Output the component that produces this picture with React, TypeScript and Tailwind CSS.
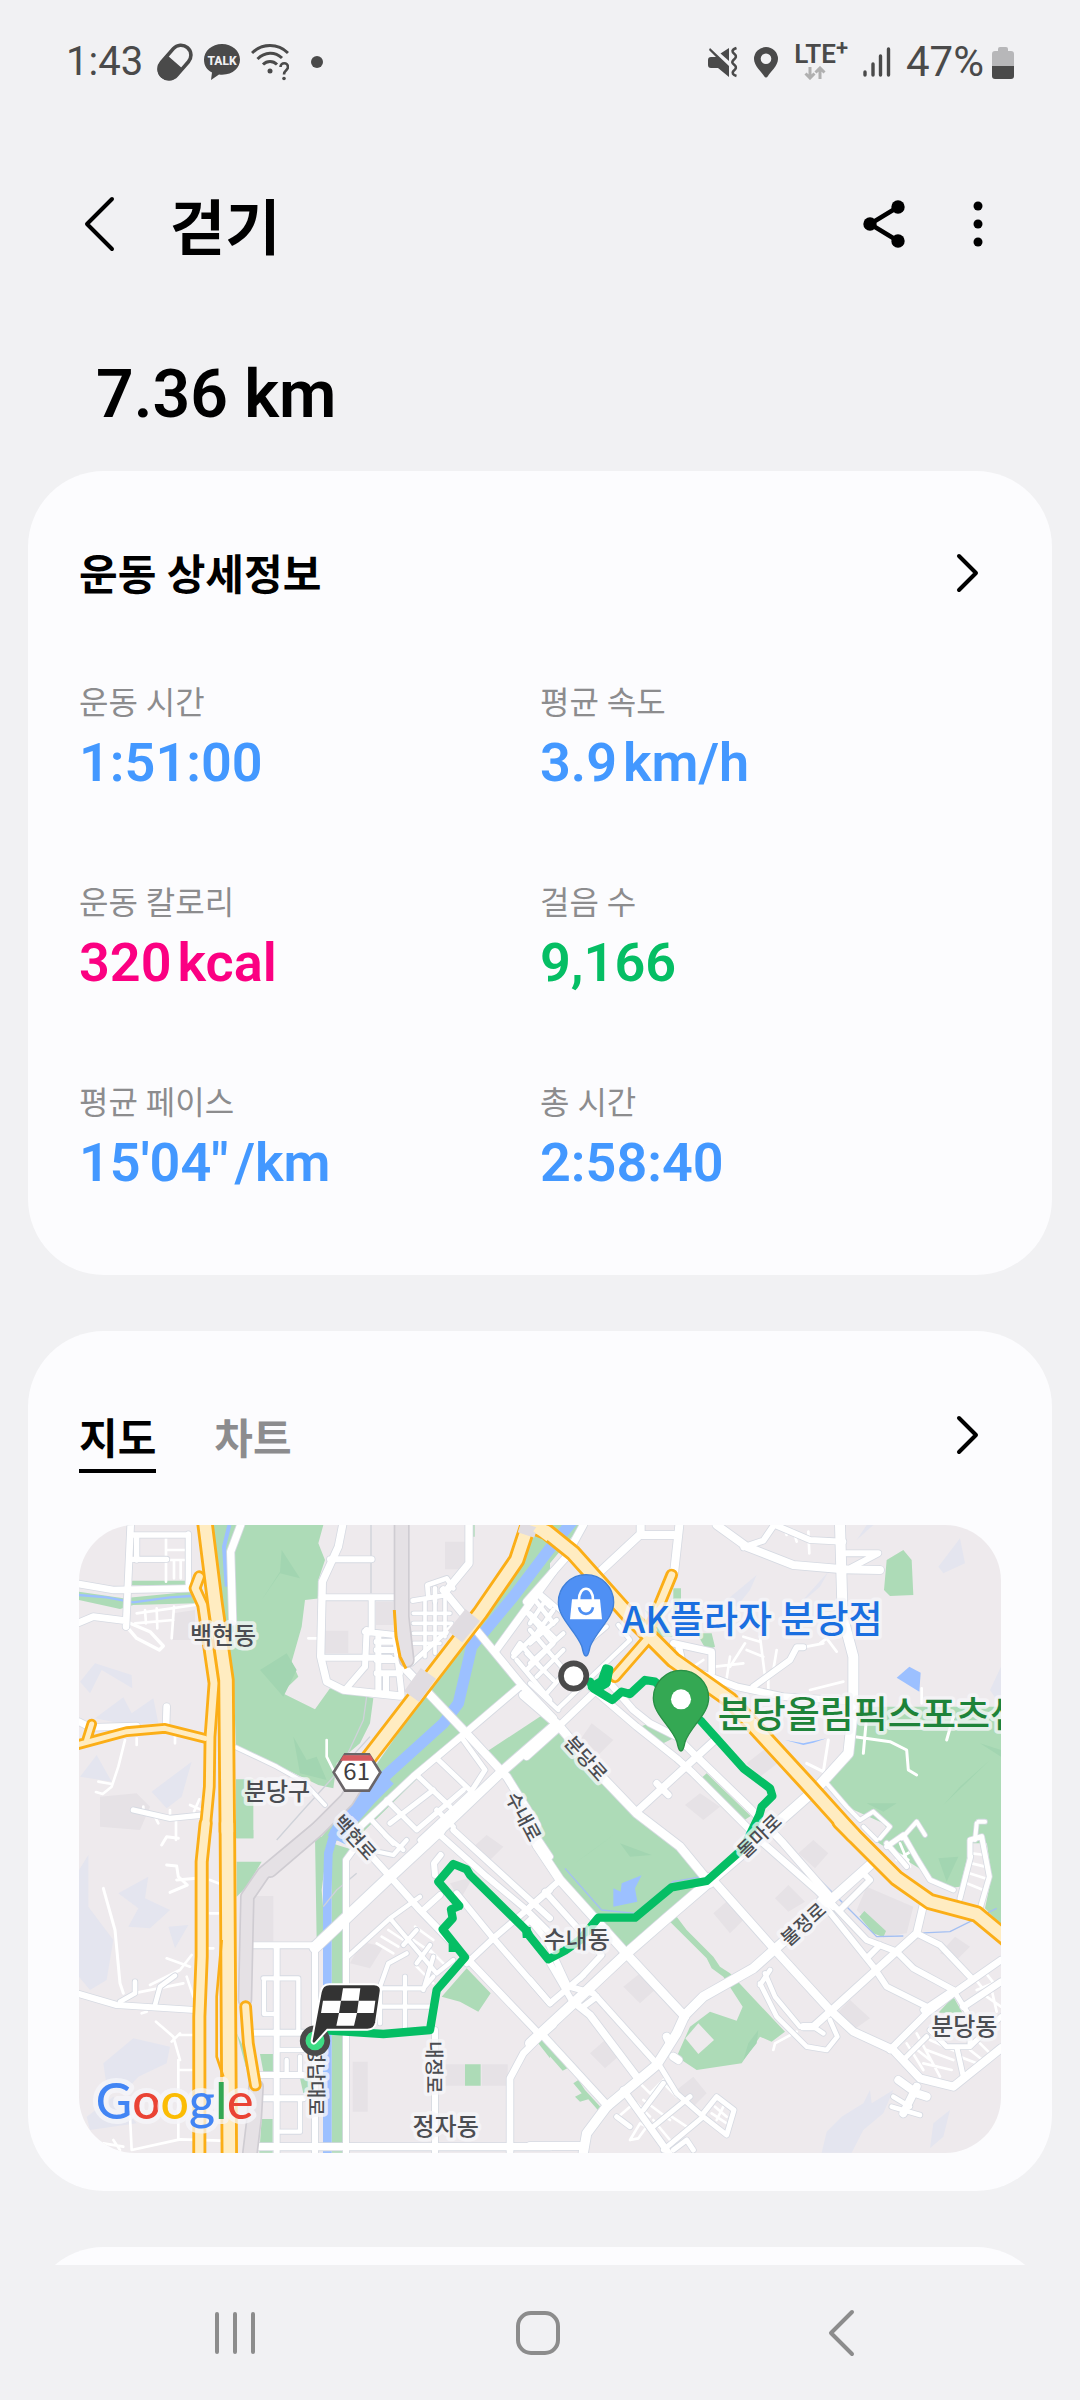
import { ReactNode } from "react";

type Tile = "nw" | "ne" | "sw" | "se";
type Line = [width: number, d: string];

// The map is drawn in four tiles that share one scale
const tileOffset: Record<Tile, string> = {
  nw: "translate(-27 -45)",
  ne: "translate(1353 -45)",
  sw: "translate(-27 915)",
  se: "translate(1353 915)",
};
const tiles: Tile[] = ["nw", "ne", "sw", "se"];

const terrain: Record<Tile, string> = {
  nw: "M30 515L75 460L185 495L187 535L95 480L60 550ZM75 625L160 562L185 610L250 565L265 640L150 640ZM30 800L80 735L125 815ZM245 845L365 755L335 860L290 895Z",
  ne: "M590 270L680 195L660 240L620 290ZM800 290L895 185L870 230ZM1225 170L1290 85L1305 160L1240 190ZM980 90L1010 45L1030 45ZM1380 540L1413 470V590Z",
  sw: "M27 120L55 75V230L130 330L110 450L60 480L27 440ZM145 190L235 140L225 205L300 240L240 295L175 290L205 235ZM295 290L355 285L315 355ZM100 700L190 625L300 650L290 700L205 740L160 790L110 770ZM50 860L130 800L200 880L60 900Z",
  se: "M875 968L890 905L935 860L1000 820L1020 780L1025 820L1090 780L1060 850L1000 900L965 968ZM1210 880L1260 840L1240 920L1200 955Z",
};

const blocks: Record<Tile, string> = {
  nw: "M765 362H835V430H765ZM1125 95H1190V178H1125ZM918 275H970V345H918ZM310 310L375 300V390H305ZM90 860L200 850L240 890L210 960L90 950Z",
  ne: "M185 640L250 690L205 735L150 690ZM650 760L720 705L755 750L690 800ZM465 885L510 850L570 890L520 930Z",
  sw: "M550 198H610V335H550ZM848 695H893V845H848ZM1235 703H1313V767H1235ZM1125 703H1185V767H1125ZM875 335L940 350L900 415L840 400ZM1205 55L1250 15L1300 50L1260 90ZM1140 160L1210 140L1170 210Z",
  se: "M550 250L595 210L650 260L600 310ZM735 205L775 165L825 215L775 245ZM805 70L850 30L895 70L855 115ZM280 470L330 430L380 475L330 520ZM180 670L225 630L270 675L225 715ZM440 780L490 740L530 790L490 830ZM925 545L960 510L1020 565L970 600ZM1010 170L1150 230L1130 310L1060 320L980 240ZM1230 370L1275 320L1320 350L1280 390Z",
};

const parks: Record<Tile, string> = {
  nw: "M428 45H760L745 100L765 150L745 210L750 265L705 270L695 350L665 455L685 500L635 548L735 598L780 535L910 565L900 640L870 700L800 760L790 835L745 825L498 705L490 500L450 250ZM1390 90L1440 45V200L1275 415L1350 525L1185 665L860 985L740 1000L880 820L1060 560L1200 350ZM27 245L160 265L360 245L375 280L190 285L150 297L27 270ZM185 212H350V226H185ZM498 808H550V985H498ZM1208 45H1214V80H1208Z",
  ne: "M-20 45H155L60 160L-20 260ZM-155 730L-20 620L50 590L85 668L310 915L440 1000L520 1100L525 1135L290 1312L200 1225L85 1110L20 990L-80 790ZM1050 590H1413V1000H1100L1060 940L950 890L885 815L960 750L985 590ZM1120 120L1145 150L1150 255L1080 258L1062 240L1070 150ZM530 790L662 918L640 932L508 810ZM370 635L430 685L400 700L330 650ZM430 235H453V265L430 330ZM345 300L400 330L430 380L385 380ZM500 370H545L555 410L530 422Z",
  sw: "M500 0H550V25H500ZM735 20H775L755 180L765 300L740 330ZM500 95H575L530 170L500 200ZM785 40L850 60L828 100V968H785ZM570 672H610V725H580ZM575 867H608V968H568ZM690 745H730V775L700 790ZM1115 500L1190 415L1262 490L1225 545L1170 515ZM1185 703H1232V767H1185ZM1405 640L1440 670V685ZM500 610L520 650L530 720Z",
  se: "M440 260L470 300L550 380L570 410L600 430L765 605L725 635L690 620L635 700L500 720L440 680L480 590L540 545L620 572L638 530L580 440L545 415L530 385L420 275ZM35 630L112 715L98 722L25 640ZM145 750L165 780L215 835L208 845L175 808L150 815L135 800L155 790L130 760ZM1003 243L1068 303L1060 322L1030 310L988 260ZM1080 0H1320L1310 90L1290 170L1250 175L1160 110L1040 35ZM1365 0H1413V285L1365 235L1385 140ZM1270 500L1297 548H1225Z",
};

const parkShade: Record<Tile, string> = {
  nw: "M635 120L690 205L630 190L575 270L630 185ZM570 480L650 430L680 480L640 560ZM670 680L710 750L740 740L770 810L690 790Z",
  ne: "M1010 880L1100 880L1060 905ZM1240 885L1380 750L1290 830ZM1350 700L1413 720V740Z",
  sw: "",
  se: "M135 100L250 15L190 60ZM270 40L365 75L300 80ZM1225 85L1285 80L1250 155ZM655 640L685 600L680 640L640 690Z",
};

const minorRoads: Record<Tile, Line[]> = {
  nw: [
    [8, "M288 85V215M312 150V205M332 150V205M290 120H345M290 150H345"],
    [8, "M200 310L375 285M195 340L310 330M312 290L305 385M260 295L262 355M225 300L228 340"],
    [10, "M170 350L200 385L268 420L280 408L240 365L180 340"],
    [8, "M165 690L145 770L125 830L98 852L78 846M85 815L125 822M200 685V705M315 675V700"],
    [8, "M265 940L250 910M300 900V930M360 885L395 900M372 905L388 868M318 930V990M220 890V905"],
    [8, "M770 690V740L790 780M715 385H745"],
  ],
  ne: [
    [8, "M790 60L800 95M835 65L838 130M765 60L770 75"],
    [8, "M690 380L705 500M650 420L700 440M645 400L600 470M740 420L730 480M840 540L940 515M870 400L890 385L920 425M640 380L690 395M830 410L880 400"],
    [8, "M555 470L640 460M600 440L590 505M460 450L500 490M475 480L520 450M715 510V550M1175 535V580"],
    [9, "M975 680L1080 695L1130 720L1135 780L1160 795M1008 640L1000 730M1270 620L1250 690M895 690L880 785L830 760"],
  ],
  sw: [
    [9, "M100 175L135 300L150 460L160 490M290 105L320 108L325 140L352 165L300 187M320 150L380 145M275 45L290 20L325 25"],
    [8, "M290 385L360 410M365 375L330 420L240 465M190 490L340 460M350 440L370 500M215 550L230 545M258 575L310 620L330 690M330 615H370M305 635L330 610M420 250H445M415 355H430M420 150L445 160"],
    [8, "M325 690V930M325 720H365M180 860L185 960L330 928L450 932M100 940L160 950M130 930L150 960"],
    [8, "M920 340L970 370M935 320L985 350M955 300L1000 330M1035 290L1090 330M1015 320L1080 365M1080 360L1130 410M1040 410L1090 460"],
  ],
  se: [
    [8, "M330 760L370 800M360 790L410 740M320 820L360 860M340 810L420 870M400 760L440 800M390 880L440 830M420 930L370 870M410 850L470 890M265 860L300 830M300 930L330 880L350 890L325 925L300 930"],
    [8, "M1130 640L1180 720M1160 610L1230 740M1150 650L1200 690M1190 660L1270 690M1180 700L1265 720M1200 630L1280 665M1320 660L1370 700M1350 640L1390 680M1290 680L1340 700"],
    [8, "M1330 440L1370 490M1360 420L1400 470M1340 480L1413 450M1370 500L1413 530M1385 480L1400 545"],
    [8, "M1325 70L1365 75M1325 100L1365 110M1318 130L1365 145M1310 160L1360 180M1085 60L1135 90M1100 90L1150 60M1110 40L1140 110"],
    [8, "M555 830L590 860M545 850L590 880M580 830L560 870M730 660L735 640L800 605M740 500L790 570"],
  ],
};

const roads: Record<Tile, Line[]> = {
  nw: [
    [20, "M27 222L130 240L365 235M182 45L168 350M27 338L70 320L165 332"],
    [16, "M180 75H355M355 72V225M200 80V150M180 148H290"],
    [22, "M512 45L482 125L488 335"],
    [12, "M498 712L620 770L700 815L765 885"],
    [20, "M27 635L60 652L200 648M290 590L288 655"],
    [16, "M190 900L300 925L400 915"],
    [22, "M818 45L805 110L757 215L752 440L770 515L820 540L990 558"],
    [18, "M780 148H905M755 262H975M755 443H960M905 262V360M890 360L885 470M885 365L975 375L995 555M925 380V550M825 540L885 470M920 395H980M920 420H980M920 450H980M920 490H990M948 490V555"],
    [22, "M1197 45V160L1135 235"],
    [14, "M1075 262L1072 225L1130 205L1150 235M1028 272L1130 255M1025 460L1145 350M1095 235V275"],
    [11, "M1065 270V440M1095 265V430M1030 310H1140M1030 340H1145M1030 370H1130M1030 400H1110M1125 255V380"],
    [22, "M1120 240L1190 325L1355 525L1450 625"],
    [24, "M1000 470L1185 665L1310 800L1400 945"],
    [22, "M1450 185L1275 425"],
    [14, "M1440 290L1400 250M1395 270L1450 340M1365 300L1450 400M1330 440L1400 370L1450 300M1340 450L1440 570M1370 480L1450 400M1330 430L1350 400L1410 470"],
    [20, "M1355 525L1185 670L1030 800L860 960"],
    [28, "M1450 650L1295 785L1090 980"],
    [15, "M1180 690L1245 780L1200 850L1050 990M1040 795L1140 890M1100 745L1210 850M950 870L1040 960L1180 840M900 925L970 1000M1090 840L960 940M1100 900L1150 950"],
  ],
  ne: [
    [22, "M160 45L105 145L-10 275"],
    [24, "M332 45V72L205 190M330 75H430M448 45L432 190"],
    [24, "M560 45L650 110L790 165L940 178L1050 180"],
    [18, "M732 45L700 92L640 112M735 45L840 90L940 95M950 130H1045L965 172"],
    [30, "M930 45L938 320L970 440L970 590L955 730L860 835L690 985L410 1225L290 1330L130 1480L0 1600"],
    [20, "M430 400L545 425V490M445 405L460 470L620 530L760 560L985 575"],
    [18, "M670 530L780 450L800 412H820"],
    [13, "M30 250L95 305M0 310L75 385M0 360L120 500M-10 430L70 510M0 520L85 600M0 340L40 280M0 400L80 330M0 460L100 370M20 500L100 420M50 550L120 470M85 595L300 390L265 345M170 400L230 350"],
    [26, "M-20 555L85 645L215 800L320 910L450 1010L540 1120"],
    [20, "M85 650L200 540L240 500M85 655L-10 740"],
    [20, "M240 520L310 600L360 640L440 680L500 740M180 530L320 650L440 745L490 790L700 1000L860 1140L910 1190"],
    [22, "M500 740L660 895L760 1000L900 1160M320 905L560 685"],
    [20, "M380 820L415 855"],
    [12, "M890 820L950 890L990 930M990 930L1030 905L1080 950L1050 985M1000 950L1040 990M1115 985L1160 935L1185 975M1340 940L1335 990M1345 935H1365"],
  ],
  sw: [
    [18, "M27 492L140 525L375 540"],
    [14, "M195 455V490L150 515M315 437L270 470L255 525"],
    [34, "M735 352L965 135L1110 0"],
    [18, "M550 346H735M828 968V90L850 60M620 350V968M550 608H730M560 735H700M560 805H700M735 350V968M1095 600V968"],
    [13, "M580 445H685V600M582 445V552H610M690 805V905H630M650 690V735M690 680V730M620 660H700"],
    [22, "M560 950H1440"],
    [20, "M1320 968V745L1360 670L1410 620L1450 585"],
    [20, "M870 40L965 145L1050 240L1200 395L1410 615"],
    [18, "M1110 15L1250 140L1370 240L1440 310M1190 400L1270 325L1440 180M1160 190L1270 325L1440 520M1150 0L1440 265M1400 20L1440 80M1060 240L1110 195"],
    [18, "M1112 75L1092 100L1095 135"],
    [13, "M828 385L960 265L1050 200M960 265L1100 430M1100 430L1150 390M930 580V470L955 400L1010 370M930 475H1060L1090 440M920 530H1085M1005 440V600M1040 300L1000 345M1060 480L1090 380M900 60L970 75L1010 30M945 15L1000 60M1080 345L1040 400"],
  ],
  se: [
    [26, "M-10 -30L20 45L90 150L290 372L465 560"],
    [18, "M90 150L0 230M45 185L130 280L215 375L150 445M0 450L60 520L160 435M0 270L50 330L110 460M60 400L130 520M-20 290L0 270"],
    [28, "M1020 105L900 212L735 357L670 415L520 500L465 555L440 610L380 705L230 830L170 910L160 968"],
    [22, "M130 515L180 555L320 740M35 612L235 830"],
    [18, "M190 490L370 690M100 465L190 490M160 530L200 500"],
    [24, "M540 140L735 360L900 540L970 605L1090 660L1170 745L1270 770L1413 655"],
    [22, "M900 545L1110 355L1160 310L1180 225M820 590H850L900 545"],
    [14, "M690 460L740 560L830 650L890 660L922 620L900 570M705 430L735 500L810 590M850 590L880 610M690 465L720 420"],
    [18, "M910 225L1010 330L1100 365L1150 415L1270 480L1180 540M870 210L1030 410L1070 470L1190 530M1160 310L1230 345L1320 440M1000 130L1020 150L930 240M1010 385L1050 345"],
    [20, "M1080 660L1190 550L1270 490L1413 390M1300 530L1413 455"],
    [15, "M1270 480L1320 560V640M1200 600L1250 650L1320 650L1413 560M1280 650L1300 740M1120 690L1190 620"],
    [15, "M1320 80V30L1355 20L1378 140L1352 230M1322 80L1290 205M1070 50L1120 15L1160 85L1200 150L1270 180M1070 40L1130 110"],
    [24, "M1105 750L1160 790L1190 800M1160 770L1120 850"],
    [14, "M1085 830L1170 855M1090 800L1140 830"],
    [20, "M280 780L420 975"],
    [15, "M385 700L440 790L520 860L590 915L612 840L560 800L520 850M520 860L400 960M370 890L480 800M340 840L400 760M260 860L300 890M430 960L470 930L490 960"],
    [24, "M0 948H160M410 620L420 640M430 680L445 690"],
  ],
};

const railways: Record<Tile, Line[]> = {
  nw: [[44, "M995 45V320L1010 450M880 790L830 870L740 960L600 1080"]],
  ne: [],
  sw: [
    [40, "M760 -20L700 30L580 130L532 200L525 510"],
    [44, "M558 770L553 860L540 968"],
  ],
  se: [],
};

const highways: Record<Tile, Line[]> = {
  nw: [
    [30, "M388 200L375 235L398 285L432 520L420 680L418 830L405 965"],
    [44, "M405 40L435 280L468 510L472 965"],
    [24, "M20 705L170 665L285 655L405 685M50 690L65 642"],
    [44, "M1378 35L1340 150L1230 310L895 745"],
  ],
  ne: [
    [30, "M425 195L355 365M355 385L255 500"],
    [44, "M0 45L50 65L130 130L300 320L430 450L600 570L830 820L970 975"],
  ],
  sw: [
    [34, "M407 -20L395 95L395 380L388 560V975"],
    [44, "M472 -20L475 500L478 975"],
    [30, "M527 530L535 640L556 765"],
  ],
  se: [[44, "M930 -25L1100 145L1200 215L1340 252L1440 335"]],
};

// Walked route, in ne tile coordinates
const route =
  "M180 515L190 535L247 570L275 545L300 552L345 510L375 515L430 560L515 635L640 775L720 835L727 858L695 890L688 915L640 1015L530 1113L425 1132L315 1223H205L150 1290L105 1322L55 1348L0 1280L-10 1262L-180 1095L-190 1078L-230 1062L-275 1115L-212 1188L-237 1198L-232 1225L-262 1258L-195 1342L-280 1440L-300 1560L-440 1572L-600 1562";

function Tiles({ children }: { children: (tile: Tile) => ReactNode }) {
  return (
    <>
      {tiles.map((tile) => (
        <g key={tile} transform={tileOffset[tile]}>
          {children(tile)}
        </g>
      ))}
    </>
  );
}

function Lines({ lines, color, extra = 0 }: { lines: Line[]; color: string; extra?: number }) {
  return (
    <g fill="none" stroke={color} strokeLinecap="round" strokeLinejoin="round">
      {lines.map(([width, d]) => (
        <path key={d} d={d} strokeWidth={width + extra} />
      ))}
    </g>
  );
}

interface MapLabelProps {
  x: number;
  y: number;
  rotate?: number;
  size?: number;
  color?: string;
  anchor?: "start" | "middle";
  children: ReactNode;
}

function MapLabel({ x, y, rotate = 0, size = 72, color = "#4b4d52", anchor = "middle", children }: MapLabelProps) {
  return (
    <text
      transform={`translate(${x} ${y}) rotate(${rotate})`}
      y={size * 0.36}
      fontSize={size}
      fill={color}
      textAnchor={anchor}
      stroke="#f6f6f9"
      strokeOpacity="0.75"
      strokeWidth="22"
      strokeLinejoin="round"
      paintOrder="stroke"
      className="font-medium"
    >
      {children}
    </text>
  );
}

function RouteMap() {
  return (
    <svg
      viewBox="0 0 2766 1884"
      role="img"
      aria-label="지도"
      className="mt-[52px] block w-full rounded-[56px] bg-[#eeeaed] font-['Noto_Sans_CJK_KR',sans-serif]"
    >
      <Tiles>{(t) => <path d={terrain[t]} fill="#e4e5ef" />}</Tiles>
      <Tiles>{(t) => <path d={blocks[t]} fill="#e6e2e6" />}</Tiles>
      <Tiles>{(t) => <path d={parks[t]} fill="#addbb7" />}</Tiles>
      <Tiles>{(t) => <path d={parkShade[t]} fill="#a2d5b1" />}</Tiles>

      {/* Cut-outs in the parks */}
      <path d="M505 580L552 630L505 672L466 625Z" transform={tileOffset.se} fill="#eeeaed" />
      <path d="M1200 668L1395 560L1440 600L1235 735Z" transform={tileOffset.nw} fill="#eeeaed" />

      {/* Water */}
      <g transform={tileOffset.nw} fill="none" stroke="#9cc0ff">
        <path d="M1560 -30L1440 115L1330 260L1235 375" strokeWidth="34" />
        <path d="M1240 365L1205 410L1165 580L1120 640L960 785L890 850" strokeWidth="34" strokeLinejoin="round" />
        <path d="M950 800L890 860L830 930L800 990" strokeWidth="60" strokeLinejoin="round" />
        <path d="M795 960L775 1030L772 1140V1930" strokeWidth="26" />
        <path d="M478 45L462 110L470 230" strokeWidth="12" />
        <path d="M27 255L110 262L190 277L300 262L365 258" strokeWidth="7" />
      </g>
      <g transform={tileOffset.ne} fill="#9cc0ff">
        <path d="M1138 470L1172 488L1168 545L1100 503Z" />
        <path d="M765 690L820 700L890 685L850 698L820 705Z" />
      </g>
      <g transform={tileOffset.se} fill="#9cc0ff">
        <path d="M250 175L272 185L275 160L335 136L315 175L322 215L250 230Z" />
        <path
          d="M105 115L215 240L315 250L430 155L515 140M860 140L960 240L1040 320L1120 318M1150 310L1260 305L1400 235"
          fill="none"
          stroke="#a3bff2"
          strokeWidth="4"
        />
      </g>

      <g transform={tileOffset.nw} fill="none" stroke="#cfd2d9" strokeWidth="4">
        <path d="M903 45V250M890 560L880 630L820 760M900 680L700 900L620 990M760 1190L800 1140L860 1090" />
      </g>

      <Tiles>{(t) => <Lines lines={minorRoads[t]} color="#ffffff" />}</Tiles>
      <Tiles>{(t) => <Lines lines={roads[t]} color="#d6dae2" extra={5} />}</Tiles>
      <Tiles>{(t) => <Lines lines={roads[t]} color="#ffffff" />}</Tiles>
      <Tiles>{(t) => <Lines lines={railways[t]} color="#cfccd2" extra={4} />}</Tiles>
      <Tiles>{(t) => <Lines lines={railways[t]} color="#e5e1e5" extra={-6} />}</Tiles>
      <Tiles>{(t) => <Lines lines={highways[t]} color="#fbae17" extra={8} />}</Tiles>
      <Tiles>{(t) => <Lines lines={highways[t]} color="#ffecc1" extra={-9} />}</Tiles>

      <g transform={tileOffset.nw} fill="none">
        <path d="M973 300L978 380L990 440L1008 476" stroke="#fbae17" strokeWidth="9" />
        <path d="M1208 315L1155 380M1075 490L1025 560" stroke="#e0dce1" strokeWidth="56" />
        <path d="M1378 45L1368 75" stroke="#e0dce1" strokeWidth="52" />
        <path d="M1400 50L1440 80" stroke="#ffecc1" strokeWidth="34" />
      </g>
      <path
        d="M455 330L440 500V680L460 740"
        transform={tileOffset.sw}
        fill="none"
        stroke="#fbae17"
        strokeWidth="8"
      />

      {/* Route */}
      <g transform={tileOffset.ne} fill="none" stroke="#05be64" strokeLinecap="round" strokeLinejoin="round">
        <path d={route} strokeWidth="25" />
        <path d="M185 530L215 512L228 475L238 478L230 520L205 535Z" strokeWidth="24" fill="#05be64" />
      </g>
      <path d="M1360 295H1378V320H1362ZM1140 345H1160V362H1140Z" transform={tileOffset.sw} fill="#05be64" stroke="#05be64" strokeWidth="8" />

      {/* Street and district names */}
      <g transform={tileOffset.nw}>
        <MapLabel x={459} y={375}>백현동</MapLabel>
        <MapLabel x={621} y={845}>분당구</MapLabel>
        <MapLabel x={855} y={982} rotate={48} size={57}>백현로</MapLabel>
        <MapLabel x={1360} y={920} rotate={62} size={57}>수내로</MapLabel>
        <path d="M825 733H897L931 787L897 842H825L791 787Z" fill="#ffffff" stroke="#6a6568" strokeWidth="8" />
        <path d="M820 736H902L911 752H811Z" fill="#d65a5f" />
        <text x="860" y="811" fontSize="72" fill="#3f3d40" textAnchor="middle">61</text>
      </g>
      <g transform={tileOffset.ne}>
        <MapLabel x={168} y={745} rotate={48} size={57}>분당로</MapLabel>
        <MapLabel x={277} y={328} size={111} color="#1a6fe0" anchor="start">AK플라자 분당점</MapLabel>
        <MapLabel x={563} y={613} size={111} color="#1e8339" anchor="start">분당올림픽스포츠센터</MapLabel>
      </g>
      <g transform={tileOffset.sw}>
        <MapLabel x={1127} y={888}>정자동</MapLabel>
        <MapLabel x={1093} y={712} rotate={90} size={57}>내정로</MapLabel>
        <MapLabel x={738} y={752} rotate={90} size={57}>성남대로</MapLabel>
      </g>
      <g transform={tileOffset.se}>
        <MapLabel x={140} y={328}>수내동</MapLabel>
        <MapLabel x={1303} y={588}>분당동</MapLabel>
        <MapLabel x={688} y={18} rotate={-44} size={57}>돌마로</MapLabel>
        <MapLabel x={820} y={283} rotate={-42} size={57}>불정로</MapLabel>
      </g>

      {/* Place pins */}
      <g transform={tileOffset.ne}>
        <path
          d="M168 438C160 438 160 425 155 408C135 360 85 325 85 277A83 83 0 0 1 251 277C251 325 201 360 181 408C176 425 176 438 168 438Z"
          fill="#4f90f4"
          stroke="#3f7fd9"
          strokeWidth="4"
        />
        <path d="M126 268H210L216 328H120Z" fill="#ffffff" />
        <path d="M147 270C147 225 189 225 189 270" fill="none" stroke="#ffffff" strokeWidth="8" />
        <path d="M147 292C152 318 184 318 189 292" fill="none" stroke="#4f90f4" strokeWidth="8" />
        <path
          d="M453 723C445 723 445 710 440 693C420 645 370 612 370 564A83 83 0 0 1 536 564C536 612 486 645 466 693C461 710 461 723 453 723Z"
          fill="#34a853"
          stroke="#288f45"
          strokeWidth="4"
        />
        <circle cx="453" cy="568" r="30" fill="#ffffff" />
        <circle cx="131" cy="498" r="38" fill="#ffffff" stroke="#4a4a4a" strokeWidth="17" />
      </g>

      {/* Finish flag */}
      <g transform={tileOffset.sw}>
        <circle cx="735" cy="632" r="37" fill="#3ddc84" stroke="#4a4a4a" strokeWidth="17" />
        <path
          d="M778 463H912C927 463 934 471 932 484L918 578C915 593 907 599 892 599H772L737 638C731 644 724 640 725 632L752 487C755 471 763 463 778 463Z"
          fill="#333333"
          stroke="#ffffff"
          strokeWidth="6"
        />
        <path d="M819 475H871L866 512H813ZM759 512H813L807 549H753ZM866 512H916L911 549H861ZM807 549H861L852 587H799Z" fill="#ffffff" />
      </g>

      <text
        x="50"
        y="1783"
        fontSize="150"
        className="font-['Lato',sans-serif] font-medium"
        stroke="#f6f6f9"
        strokeOpacity="0.75"
        strokeWidth="30"
        strokeLinejoin="round"
        paintOrder="stroke"
      >
        <tspan fill="#4285f4">G</tspan>
        <tspan fill="#ea4335">o</tspan>
        <tspan fill="#fbbc05">o</tspan>
        <tspan fill="#4285f4">g</tspan>
        <tspan fill="#34a853">l</tspan>
        <tspan fill="#ea4335">e</tspan>
      </text>
    </svg>
  );
}

function StatusBar() {
  return (
    <div className="flex h-[124px] shrink-0 items-center justify-between px-[66px] text-[42px] leading-none text-[#4a4a4a]">
      <div className="flex items-center gap-[10px]">
        <span className="mr-[4px] text-[40px]">1:43</span>
        <svg width="36" height="38" viewBox="0 0 36 38">
          <g transform="rotate(-49 18 19)">
            <rect x="-1" y="9" width="38" height="20" rx="10" fill="none" stroke="#4a4a4a" strokeWidth="3.6" />
            <path d="M18 8H8A11 11 0 0 0 8 30H18Z" fill="#4a4a4a" />
          </g>
        </svg>
        <svg width="38" height="38" viewBox="0 0 38 38">
          <path d="M19 1C9 1 1 8 1 16.500C1 23 4 27 9 29.500L8 37L16 31.500C29 33 37 25 37 16.500C37 8 29 1 19 1Z" fill="#4a4a4a" />
          <text x="19" y="21.500" fontSize="12" fontWeight="800" textAnchor="middle" fill="#f1f1f3">TALK</text>
        </svg>
        <svg width="38" height="38" viewBox="0 0 38 38" fill="none" stroke="#4a4a4a" strokeWidth="3">
          <path d="M1 10C11 0 27 0 37 10M6.500 16C14 8.500 24 8.500 31 15M12 21.500C16 17.500 22 17.500 26 21.500" />
          <circle cx="19" cy="28" r="2.500" fill="#4a4a4a" stroke="none" />
          <path d="M29.500 24C29.500 19 37 19 37 24C37 27.500 33 27 33 31.500" strokeWidth="2.600" />
          <circle cx="33" cy="35.500" r="1.800" fill="#4a4a4a" stroke="none" />
        </svg>
        <span className="ml-[12px] size-3 rounded-full bg-[#4a4a4a]" />
      </div>
      <div className="flex items-center gap-[15px]">
        <svg width="30" height="32" viewBox="0 0 30 32">
          <path d="M2 2L21 20V31L10 22H3Q0 22 0 19V14Q0 11 3 11H8L1 4ZM21 2V15L12.500 7.500Z" fill="#4a4a4a" />
          <path d="M28.500 2C23 4 24 6 26.500 8C29 10 28 12 25.500 14C23.500 16 24 17 26.500 19C29 21 28 23 25.500 25C23.500 27 25 29 28.500 30" fill="none" stroke="#4a4a4a" strokeWidth="2.600" />
        </svg>
        <svg width="26" height="32" viewBox="0 0 26 32">
          <path d="M13 1A12 12 0 0 0 1 13C1 20 9 26 11 30Q13 33 15 30C17 26 25 20 25 13A12 12 0 0 0 13 1ZM13 7.500A5.300 5.300 0 1 1 13 18.100A5.300 5.300 0 1 1 13 7.500Z" fill="#4a4a4a" fillRule="evenodd" />
        </svg>
        <span className="relative flex h-[36px] items-start text-[26px] font-semibold leading-[20px]">
          LTE<span className="-mt-[6px] text-[22px]">+</span>
          <svg width="22" height="14" viewBox="0 0 22 14" className="absolute bottom-0 left-[10px]" fill="none" stroke="#b0b0b0" strokeWidth="3">
            <path d="M6 1V12M1.500 7.500L6 12L10.500 7.500M16 13V2M11.500 6.500L16 2L20.500 6.500" />
          </svg>
        </span>
        <svg width="28" height="32" viewBox="0 0 28 32" stroke="#4a4a4a" strokeWidth="3.400" strokeLinecap="round">
          <path d="M2 26V29M10 18V29M17.500 10V29M25.500 3V29" />
        </svg>
        <span className="flex items-center gap-[8px]">
          47%
          <svg width="22" height="33" viewBox="0 0 22 33">
            <path d="M6 5V3Q6 1 8 1H14Q16 1 16 3V5H19Q22 5 22 8V20H0V8Q0 5 3 5Z" fill="#b7b7b9" />
            <path d="M0 20H22V30Q22 33 19 33H3Q0 33 0 30Z" fill="#4a4a4a" />
          </svg>
        </span>
      </div>
    </div>
  );
}

function Chevron() {
  return (
    <svg width="24" height="40" viewBox="0 0 24 40" fill="none" stroke="#000000" strokeWidth="4" strokeLinecap="round" strokeLinejoin="round">
      <path d="M4 3L21 20L4 37" />
    </svg>
  );
}

const stats = [
  { label: "운동 시간", value: "1:51:00", color: "text-[#4398ff]" },
  { label: "평균 속도", value: "3.9", unit: "km/h", color: "text-[#4398ff]" },
  { label: "운동 칼로리", value: "320", unit: "kcal", color: "text-[#fb0082]" },
  { label: "걸음 수", value: "9,166", color: "text-[#05be64]" },
  { label: "평균 페이스", value: "15'04\"", unit: "/km", color: "text-[#4398ff]" },
  { label: "총 시간", value: "2:58:40", color: "text-[#4398ff]" },
];

export default function App() {
  return (
    <div className="flex h-screen flex-col bg-[#f1f1f3] font-['Roboto','Noto_Sans_CJK_KR',sans-serif] text-black">
      <StatusBar />

      <header className="flex h-[200px] shrink-0 items-center justify-between pl-[76px] pr-[81px]">
        <div className="flex items-center gap-[48px]">
          <button aria-label="뒤로" className="p-1">
            <svg width="38" height="60" viewBox="0 0 38 60" fill="none" stroke="#000000" strokeWidth="4" strokeLinecap="round" strokeLinejoin="round">
              <path d="M32 5L7 30L32 55" />
            </svg>
          </button>
          <h1 className="pt-3 text-[60px] font-bold leading-[72px]">걷기</h1>
        </div>
        <div className="flex items-center gap-[52px]">
          <button aria-label="공유">
            <svg width="42" height="50" viewBox="0 0 42 50" fill="none" stroke="#000000" strokeWidth="4.500">
              <path d="M35 8L7 25L35 42" />
              <g fill="#000000" stroke="none">
                <circle cx="35" cy="8" r="6.700" />
                <circle cx="7" cy="25" r="6.700" />
                <circle cx="35" cy="42" r="6.700" />
              </g>
            </svg>
          </button>
          <button aria-label="더보기" className="px-4">
            <svg width="10" height="48" viewBox="0 0 10 48">
              <circle cx="5" cy="6" r="4.500" />
              <circle cx="5" cy="24" r="4.500" />
              <circle cx="5" cy="42" r="4.500" />
            </svg>
          </button>
        </div>
      </header>

      <main className="min-h-0 flex-1 overflow-y-auto px-7 [scrollbar-width:none]">
        <p className="pb-[40px] pl-[68px] pt-[35px] text-[66px] font-semibold leading-[72px]">7.36 km</p>

        {/* Workout details */}
        <section className="rounded-[76px] bg-[#fcfcfe] px-[51px] pb-[76px] pt-[70px]">
          <div className="flex h-16 items-center justify-between">
            <h2 className="pt-1 text-[42px] font-bold">운동 상세정보</h2>
            <button aria-label="운동 상세정보" className="pr-[22px]">
              <Chevron />
            </button>
          </div>
          <dl className="mt-[74px] grid grid-cols-2 gap-y-20">
            {stats.map((stat) => (
              <div key={stat.label}>
                <dt className="text-[32px] leading-[48px] text-[#8c8c8e]">{stat.label}</dt>
                <dd className={`flex gap-[6px] text-[54px] font-semibold leading-[72px] ${stat.color}`}>
                  <span>{stat.value}</span>
                  {stat.unit && <span>{stat.unit}</span>}
                </dd>
              </div>
            ))}
          </dl>
        </section>

        {/* Map and chart */}
        <section className="mt-14 rounded-[76px] bg-[#fcfcfe] px-[51px] pb-[38px] pt-[72px]">
          <div className="flex items-start justify-between">
            <div role="tablist" className="flex gap-[58px] text-[42px] font-bold leading-[58px]">
              <button role="tab" aria-selected="true" className="border-b-4 border-black pt-2">
                지도
              </button>
              <button role="tab" aria-selected="false" className="border-b-4 border-transparent pt-2 text-[#8c8c8e]">
                차트
              </button>
            </div>
            <button aria-label="지도" className="flex h-16 items-center pr-[22px]">
              <Chevron />
            </button>
          </div>
          <RouteMap />
        </section>

        <section className="mt-14 h-40 rounded-[76px] bg-[#fcfcfe]" />
      </main>

      <nav className="flex h-[135px] shrink-0 items-center pl-[84px] pr-[88px] text-[#8c8c8c]">
        <button aria-label="최근 앱" className="flex flex-1 justify-center">
          <svg width="40" height="44" viewBox="0 0 40 44" stroke="currentColor" strokeWidth="4" strokeLinecap="round">
            <path d="M2 3V41M20 3V41M38 3V41" />
          </svg>
        </button>
        <button aria-label="홈" className="flex flex-1 justify-center">
          <svg width="44" height="44" viewBox="0 0 44 44" fill="none" stroke="currentColor" strokeWidth="4">
            <rect x="2" y="2" width="40" height="40" rx="13" />
          </svg>
        </button>
        <button aria-label="이전" className="flex flex-1 justify-center">
          <svg width="28" height="48" viewBox="0 0 28 48" fill="none" stroke="currentColor" strokeWidth="4" strokeLinecap="round" strokeLinejoin="round">
            <path d="M25 3L4 24L25 45" />
          </svg>
        </button>
      </nav>
    </div>
  );
}
